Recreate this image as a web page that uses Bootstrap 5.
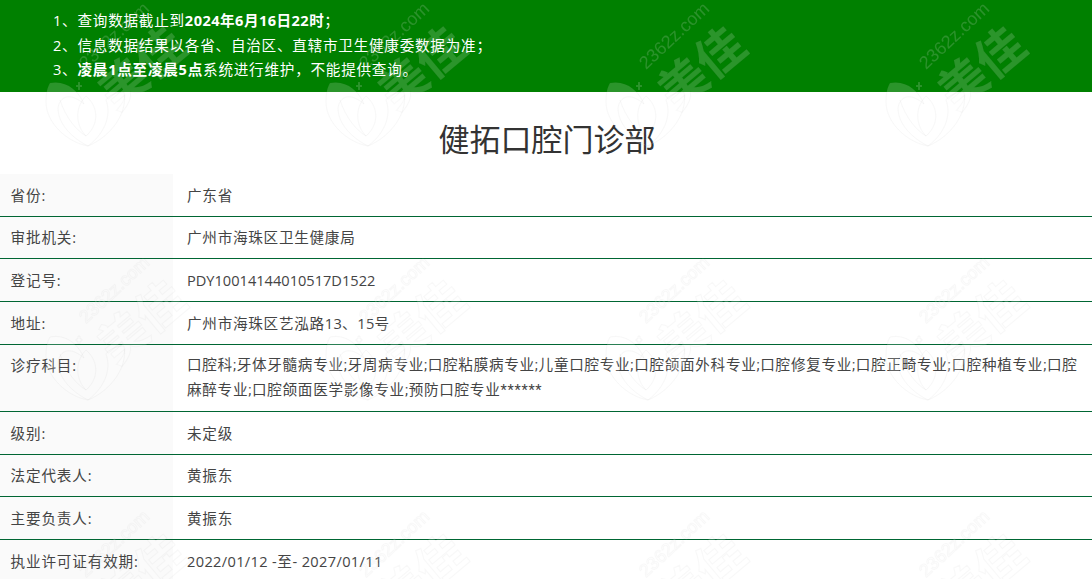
<!DOCTYPE html>
<html lang="zh-CN">
<head>
<meta charset="utf-8">
<title>健拓口腔门诊部</title>
<link href="https://cdn.jsdelivr.net/npm/bootstrap@5.3.0/dist/css/bootstrap.min.css" rel="stylesheet">
<style>
html, body { height: 579px; overflow: hidden; }
body { font-family: "Open Sans", "Noto Sans CJK SC", sans-serif; color: #333; position: relative; background: #fff; }
.notice-bar { background: #008000; color: #fff; height: 92px; padding: 8px 0 0 53px; font-size: 14.6px; line-height: 24.5px; letter-spacing: .75px; }
.notice-bar ol { list-style: none; margin: 0; padding: 0; }
.notice-bar b { font-weight: 700; }
.notice-bar .date-bold { letter-spacing: .45px; }
.id-run { letter-spacing: 0; }
.date-run { letter-spacing: .35px; }
.num-run { letter-spacing: .25px; }
.page-title { font-size: 31px; line-height: 40px; text-align: center; font-weight: 400; color: #333; margin: 0; padding: 27px 0 15px 2px; }
.info-row { border-bottom: 1px solid #006633; font-size: 14.6px; line-height: 24.67px; letter-spacing: .72px; color: #444; }
.info-key { flex: 0 0 173px; background: #fafafa; padding: 8.5px 10.5px; letter-spacing: .85px; }
.info-val { flex: 1 1 0; min-width: 0; padding: 8.5px 10px 8.5px 14px; }
.info-val.subject-list { font-family: Roboto, "Noto Sans CJK SC", sans-serif; letter-spacing: .7px; padding-right: 8px; }
.mark-layer { position: absolute; inset: 0; width: 1092px; height: 579px; pointer-events: none; }
.mark-text { font-family: "Liberation Sans", sans-serif; font-size: 18px; }
.mark-han { font-family: "Noto Sans CJK SC", sans-serif; font-size: 48px; font-weight: 700; }
.mark-shape { fill: #fff; fill-opacity: .17; stroke: #000; stroke-opacity: .028; stroke-width: 1; }
.mark-line { fill: none; stroke: #000; stroke-opacity: .028; }
</style>
</head>
<body>
<div class="notice-bar">
  <ol>
    <li>1、查询数据截止到<b class="date-bold">2024年6月16日22时</b>&#xFF1B;</li>
    <li>2、信息数据结果以各省、自治区、直辖市卫生健康委数据为准&#xFF1B;</li>
    <li>3、<b>凌晨1点至凌晨5点</b>系统进行维护&#xFF0C;不能提供查询。</li>
  </ol>
</div>
<h1 class="page-title">健拓口腔门诊部</h1>
<div class="info-list">
  <div class="info-row d-flex"><div class="info-key">省份:</div><div class="info-val">广东省</div></div>
  <div class="info-row d-flex"><div class="info-key">审批机关:</div><div class="info-val">广州市海珠区卫生健康局</div></div>
  <div class="info-row d-flex"><div class="info-key">登记号:</div><div class="info-val"><span class="id-run">PDY10014144010517D1522</span></div></div>
  <div class="info-row d-flex"><div class="info-key">地址:</div><div class="info-val">广州市海珠区艺泓路<span class="num-run">13</span>、<span class="num-run">15</span>号</div></div>
  <div class="info-row d-flex"><div class="info-key">诊疗科目:</div><div class="info-val subject-list">口腔科;牙体牙髓病专业;牙周病专业;口腔粘膜病专业;儿童口腔专业;口腔颌面外科专业;口腔修复专业;口腔正畸专业;口腔种植专业;口腔麻醉专业;口腔颌面医学影像专业;预防口腔专业******</div></div>
  <div class="info-row d-flex"><div class="info-key">级别:</div><div class="info-val">未定级</div></div>
  <div class="info-row d-flex"><div class="info-key">法定代表人:</div><div class="info-val">黄振东</div></div>
  <div class="info-row d-flex"><div class="info-key">主要负责人:</div><div class="info-val">黄振东</div></div>
  <div class="info-row d-flex"><div class="info-key">执业许可证有效期:</div><div class="info-val"><span class="date-run">2022/01/12 -</span>至<span class="date-run">- 2027/01/11</span></div></div>
</div>
<svg class="mark-layer" xmlns="http://www.w3.org/2000/svg" aria-hidden="true">
  <defs>
    <pattern id="wm" x="16" y="0" width="280" height="254" patternUnits="userSpaceOnUse">
      <text class="mark-text mark-shape" transform="translate(70 70) rotate(-43)">2362z.com</text>
      <text class="mark-han mark-shape" transform="translate(100 112) rotate(-40)">美佳</text>
      <path class="mark-shape" d="M34 83C50 80 62 90 68 104C54 92 44 96 42 108C42 124 56 138 72 146C50 142 30 122 30 102C30 94 31 88 34 83Z"/>
      <path class="mark-shape" d="M108 92C112 112 96 136 72 146C88 134 96 116 90 100C92 96 100 92 108 92Z"/>
      <path class="mark-line" d="M70 96C58 108 60 126 70 136C82 126 84 108 70 96Z"/>
      <path class="mark-line" d="M44 100C50 118 60 130 70 136"/>
      <path class="mark-shape" d="M60 85h2v-3h2v3h2v2h-2v3h-2v-3h-2Z"/>
    </pattern>
  </defs>
  <rect width="1092" height="579" fill="url(#wm)"/>
</svg>
<script src="https://cdn.jsdelivr.net/npm/bootstrap@5.3.0/dist/js/bootstrap.bundle.min.js"></script>
</body>
</html>
